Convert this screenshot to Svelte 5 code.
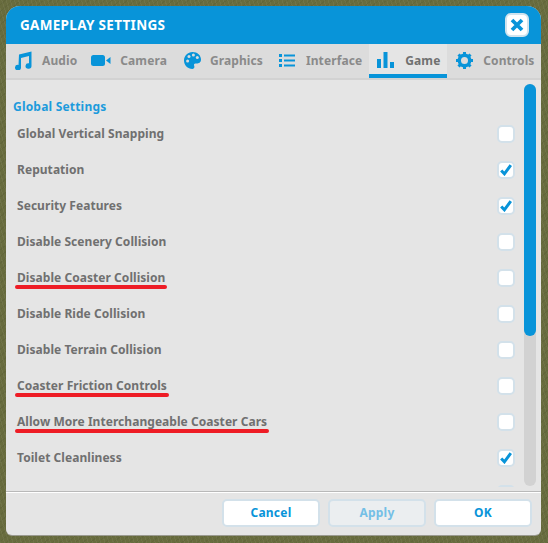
<script>
  const tabs = [
    { id: "audio", label: "Audio", gap: 10 },
    { id: "camera", label: "Camera", gap: 9 },
    { id: "graphics", label: "Graphics", gap: 9 },
    { id: "interface", label: "Interface", gap: 11 },
    { id: "game", label: "Game", gap: 11, active: true },
    { id: "controls", label: "Controls", gap: 10 }
  ];

  const rows = [
    { label: "Global Vertical Snapping" },
    { label: "Reputation", checked: true },
    { label: "Security Features", checked: true },
    { label: "Disable Scenery Collision" },
    { label: "Disable Coaster Collision", mark: true },
    { label: "Disable Ride Collision" },
    { label: "Disable Terrain Collision" },
    { label: "Coaster Friction Controls", mark: true },
    { label: "Allow More Interchangeable Coaster Cars", mark: true },
    { label: "Toilet Cleanliness", checked: true },
    { label: "" }
  ];
</script>

<div class="page">
  <div class="window">
    <header class="titlebar">
      <h1>GAMEPLAY SETTINGS</h1>
      <button class="close" aria-label="Close">
        <svg width="14" height="14" viewBox="0 0 14 14">
          <path d="M2 2 L12 12 M12 2 L2 12" stroke="#0894d9" stroke-width="3.8" />
        </svg>
      </button>
    </header>

    <nav class="tabs">
      {#each tabs as tab}
        <div class="tab {tab.id}" class:active={tab.active} style="gap: {tab.gap}px">
          {#if tab.id == "audio"}
            <svg width="18" height="19" viewBox="0 0 18 19" fill="#0894d9">
              <path d="M5 3.5 L17.5 0.5 V15 A3 2.7 0 1 1 15 12.3 V5 L7 7 V16.5 A3 2.7 0 1 1 4.5 13.9 Z" />
            </svg>
          {:else if tab.id == "camera"}
            <svg width="20" height="11" viewBox="0 0 20 11" fill="#0894d9">
              <rect x="0" y="0" width="14" height="11" rx="2.5" />
              <path d="M15 5.5 L19.5 2 V9 Z" />
            </svg>
          {:else if tab.id == "graphics"}
            <svg width="17" height="17" viewBox="0 0 17 17">
              <path fill="#0894d9" d="M8.5 0 C13.5 0 17 3.4 17 7.6 C17 10.6 14.8 11.6 12.6 11.6 H11.4 C10.2 11.6 9.6 12.6 10.1 13.6 C10.8 15 10.4 17 8.5 17 C3.6 17 0 13.2 0 8.5 C0 3.8 3.8 0 8.5 0 Z" />
              <circle cx="3.6" cy="9" r="1.5" fill="#dcdcdc" />
              <circle cx="5" cy="4.6" r="1.5" fill="#dcdcdc" />
              <circle cx="9.4" cy="3" r="1.5" fill="#dcdcdc" />
              <circle cx="13.3" cy="5.6" r="1.5" fill="#dcdcdc" />
            </svg>
          {:else if tab.id == "interface"}
            <svg width="16" height="13" viewBox="0 0 16 13" fill="#0894d9">
              <rect x="0" y="0" width="3" height="3" />
              <rect x="0" y="5" width="3" height="3" />
              <rect x="0" y="10" width="3" height="3" />
              <rect x="5" y="0.5" width="11" height="2" />
              <rect x="5" y="5.5" width="11" height="2" />
              <rect x="5" y="10.5" width="11" height="2" />
            </svg>
          {:else if tab.id == "game"}
            <svg width="17" height="16" viewBox="0 0 17 16" fill="#0894d9">
              <rect x="0" y="7" width="4" height="9" />
              <rect x="6.5" y="0" width="4" height="16" />
              <rect x="13" y="10" width="4" height="6" />
            </svg>
          {:else}
            <svg width="17" height="17" viewBox="0 0 17 17">
              <circle cx="8.5" cy="8.5" r="5.2" fill="none" stroke="#0894d9" stroke-width="3.4" />
              <path stroke="#0894d9" stroke-width="3" d="M8.5 0 V3 M8.5 14 V17 M0 8.5 H3 M14 8.5 H17 M2.5 2.5 L4.6 4.6 M12.4 12.4 L14.5 14.5 M14.5 2.5 L12.4 4.6 M4.6 12.4 L2.5 14.5" />
            </svg>
          {/if}
          <span>{tab.label}</span>
        </div>
      {/each}
    </nav>

    <div class="content">
      <div class="list">
        <h2>Global Settings</h2>
        {#each rows as row}
          <div class="row">
            <span class="label" class:mark={row.mark}>{row.label}</span>
            <span class="box">
              {#if row.checked}
                <svg width="12" height="12" viewBox="0 0 12 12">
                  <path d="M1.2 6.5 L4.4 9.8 L10.8 1.2" fill="none" stroke="#0894d9" stroke-width="3" />
                </svg>
              {/if}
            </span>
          </div>
        {/each}
      </div>
      <div class="scrollbar"><div class="thumb"></div></div>
    </div>

    <footer class="footer">
      <button>Cancel</button>
      <button disabled>Apply</button>
      <button>OK</button>
    </footer>
  </div>
</div>

<style>
  :global(body) {
    margin: 0;
    font-family: "Noto Sans", sans-serif;
  }
  .page {
    width: 548px;
    height: 543px;
    box-sizing: border-box;
    padding: 6px 7px 8px 6px;
    background-color: #686c3e;
    background-image:
      repeating-linear-gradient(73deg, rgba(255, 255, 255, 0.05) 0 1px, transparent 1px 4px),
      repeating-linear-gradient(-41deg, rgba(0, 0, 0, 0.06) 0 1px, transparent 1px 5px);
    overflow: hidden;
  }
  .window {
    height: 529px;
    display: flex;
    flex-direction: column;
    background: #e5e5e5;
    border-radius: 14px 14px 6px 6px;
    overflow: hidden;
    box-shadow: 0 1px 0 #9a9a90;
  }
  .titlebar {
    height: 38px;
    flex: none;
    display: flex;
    align-items: center;
    justify-content: space-between;
    padding: 0 12px 0 14px;
    background: #0894d9;
  }
  h1 {
    margin: 0;
    color: #fff;
    font-size: 13.5px;
    font-weight: 700;
    letter-spacing: 0.3px;
  }
  .close {
    width: 24px;
    height: 24px;
    margin-top: -1px;
    padding: 0;
    display: flex;
    align-items: center;
    justify-content: center;
    background: #fff;
    border: 2px solid #cfe3ee;
    border-radius: 6px;
  }
  .tabs {
    height: 34px;
    flex: none;
    display: flex;
    background: #dcdcdc;
    border-bottom: 2px solid #d2d2d2;
    color: #8a8a8a;
    font-size: 12px;
    font-weight: 700;
    letter-spacing: 0.1px;
  }
  .tab {
    height: 34px;
    box-sizing: border-box;
    display: flex;
    align-items: center;
    padding-bottom: 2px;
  }
  .tab.audio { padding-left: 8px; padding-right: 14px; }
  .tab.camera { padding-right: 17px; }
  .tab.graphics { padding-right: 16px; }
  .tab.interface { padding-right: 7px; }
  .tab.game {
    padding-left: 8px;
    width: 78px;
  }
  .tab.controls { padding-left: 9px; }
  .tab.active {
    background: #e5e5e5;
    border-bottom: 4px solid #0894d9;
    color: #707070;
    padding-bottom: 0;
  }
  .tab.active span,
  .tab.active svg {
    margin-top: 2px;
  }
  .content {
    flex: 1;
    min-height: 0;
    display: flex;
    justify-content: space-between;
    padding: 4px 5px 4px 7px;
    overflow: hidden;
  }
  .list {
    width: 502px;
    overflow: hidden;
  }
  h2 {
    margin: 0;
    height: 31px;
    display: flex;
    align-items: center;
    padding-top: 14px;
    box-sizing: border-box;
    color: #1d9bdc;
    font-size: 12px;
    font-weight: 700;
    letter-spacing: 0.2px;
  }
  .row {
    height: 36px;
    display: flex;
    align-items: center;
    justify-content: space-between;
    padding: 0 0 0 4px;
    color: #707070;
    font-size: 12px;
    font-weight: 700;
    letter-spacing: 0.05px;
  }
  .label {
    position: relative;
  }
  .label.mark::after {
    content: "";
    position: absolute;
    left: -2px;
    right: -2px;
    bottom: -3px;
    height: 4px;
    border-radius: 2px;
    background: #ee1c25;
  }
  .box {
    width: 18px;
    height: 18px;
    margin-top: 2px;
    box-sizing: border-box;
    display: flex;
    align-items: center;
    justify-content: center;
    background: #fff;
    border: 2px solid #d3e1ea;
    border-radius: 5px;
  }
  .scrollbar {
    width: 12px;
    height: 402px;
    background: #d2d2d2;
    border-radius: 6px;
  }
  .thumb {
    height: 252px;
    background: #0894d9;
    border-radius: 6px;
  }
  .footer {
    height: 44px;
    flex: none;
    box-sizing: border-box;
    display: flex;
    justify-content: flex-end;
    gap: 8px;
    padding: 7px 9px 0 0;
    border-top: 1px solid #b9b9b9;
    box-shadow: inset 0 1px 0 #fff;
  }
  .footer button {
    width: 98px;
    height: 28px;
    padding: 0 0 2px;
    background: #fff;
    border: 2px solid #d3e1ea;
    border-radius: 5px;
    color: #0894d9;
    font-family: inherit;
    font-size: 12px;
    font-weight: 700;
    letter-spacing: 0.2px;
  }
  .footer button:disabled {
    background: #ebeef0;
    color: #74bfe6;
  }
</style>
